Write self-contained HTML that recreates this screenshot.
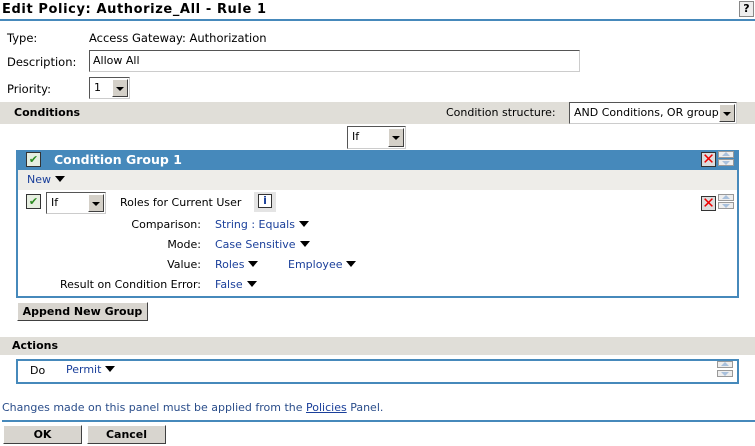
<!DOCTYPE html>
<html><head><style>
*{margin:0;padding:0;box-sizing:border-box}
body{width:755px;height:446px;background:#fff;font-family:"DejaVu Sans","Liberation Sans",sans-serif;font-size:11px;color:#000;position:relative;overflow:hidden}
.a{position:absolute;white-space:nowrap}
.lnk{color:#1a3f9a}
.tri{display:inline-block;width:0;height:0;border-left:5px solid transparent;border-right:5px solid transparent;border-top:6px solid #000;margin-left:4px;vertical-align:1px}
.sel{position:absolute;background:#fff;border:1px solid #555;border-right-color:#ccc;border-bottom-color:#ccc;padding-left:4px;line-height:19px}
.sel .b{position:absolute;right:1px;top:1px;bottom:1px;width:16px;background:#d4d0c8;border:1px solid;border-color:#fff #404040 #404040 #fff}
.sel .b:after{content:"";position:absolute;left:3px;top:7px;border-left:4px solid transparent;border-right:4px solid transparent;border-top:4px solid #000}
.bar{position:absolute;left:0;width:755px;background:#e0ded8;font-weight:bold}
.btn{position:absolute;background:#d8d5cf;border:1px solid;border-color:#fff #404040 #404040 #fff;font-weight:bold;text-align:center;line-height:17px}
.chk{position:absolute;width:15px;height:15px;border:1px solid #333;background:#e6eee0;color:#2a8a20;font-size:11px;line-height:13px;text-align:center;font-weight:bold}
.xx{position:absolute;width:15px;height:15px;border:1px solid #333;background:#ddd;color:#e00;font-weight:bold;font-size:15px;line-height:13px;text-align:center}
.ud{position:absolute;width:16px;height:7px;border:1px solid #999;background:#eee}
.ud:after{content:"";position:absolute;left:3px;border-left:4px solid transparent;border-right:4px solid transparent}
.up:after{top:0;border-bottom:4px solid #a8c0dc}
.dn:after{top:1px;border-top:4px solid #a8c0dc}
</style></head><body>
<div class="a" style="left:2px;top:2px;font-size:13px;font-weight:bold;letter-spacing:0.6px">Edit Policy: Authorize_All - Rule 1</div>
<div class="a" style="left:739px;top:1px;width:15px;height:16px;border:1px solid #888;background:#eee;font-weight:bold;text-align:center;line-height:14px">?</div>
<div class="a" style="left:0;top:19px;width:755px;height:2px;background:#4689bb"></div>

<div class="a" style="left:7px;top:31px;font-size:11.5px">Type:</div>
<div class="a" style="left:89px;top:31px;font-size:11.5px">Access Gateway: Authorization</div>
<div class="a" style="left:7px;top:55px;font-size:11.5px">Description:</div>
<div class="a" style="left:89px;top:50px;width:491px;height:22px;border:1px solid #555;border-right-color:#ccc;border-bottom-color:#ccc;padding:3px 3px;line-height:14px">Allow All</div>
<div class="a" style="left:7px;top:82px;font-size:11.5px">Priority:</div>
<div class="sel" style="left:89px;top:77px;width:41px;height:22px">1<div class="b"></div></div>

<div class="bar" style="top:102px;height:22px"><span class="a" style="left:14px;top:4px">Conditions</span></div>
<div class="a" style="left:446px;top:106px">Condition structure:</div>
<div class="sel" style="left:569px;top:102px;width:168px;height:22px;overflow:hidden">AND Conditions, OR groups<div class="b"></div></div>
<div class="sel" style="left:347px;top:126px;width:59px;height:23px">If<div class="b"></div></div>

<div class="a" style="left:16px;top:150px;width:723px;height:148px;border:2px solid #4689bb"></div>
<div class="a" style="left:16px;top:150px;width:723px;height:20px;background:#4689bb"></div>
<div class="chk" style="left:26px;top:152px">✔</div>
<div class="a" style="left:54px;top:152px;color:#fff;font-weight:bold;font-size:12.5px">Condition Group 1</div>
<div class="xx" style="left:701px;top:152px">✕</div>
<div class="ud up" style="left:718px;top:151px"></div><div class="ud dn" style="left:718px;top:159px"></div>
<div class="a" style="left:18px;top:170px;width:719px;height:20px;background:#eeede9"></div>
<div class="a lnk" style="left:27px;top:173px">New<span class="tri"></span></div>

<div class="chk" style="left:26px;top:194px">✔</div>
<div class="sel" style="left:46px;top:192px;width:60px;height:22px">If<div class="b"></div></div>
<div class="a" style="left:120px;top:196px">Roles for Current User</div>
<div class="a" style="left:254px;top:192px;width:22px;height:20px;background:#e4e4e4"><div style="position:absolute;left:4px;top:2px;width:14px;height:14px;border:1px solid #333;background:#fff;text-align:center;font-weight:bold;color:#1a3f9a;line-height:12px;font-size:11px">i</div></div>
<div class="xx" style="left:701px;top:196px">✕</div>
<div class="ud up" style="left:718px;top:194px"></div><div class="ud dn" style="left:718px;top:202px"></div>

<div class="a" style="right:554px;top:218px">Comparison:</div>
<div class="a lnk" style="left:215px;top:218px">String : Equals<span class="tri"></span></div>
<div class="a" style="right:554px;top:238px">Mode:</div>
<div class="a lnk" style="left:215px;top:238px">Case Sensitive<span class="tri"></span></div>
<div class="a" style="right:554px;top:258px">Value:</div>
<div class="a lnk" style="left:215px;top:258px">Roles<span class="tri"></span></div>
<div class="a lnk" style="left:288px;top:258px">Employee<span class="tri"></span></div>
<div class="a" style="right:554px;top:278px">Result on Condition Error:</div>
<div class="a lnk" style="left:215px;top:278px">False<span class="tri"></span></div>

<div class="btn" style="left:17px;top:302px;width:131px;height:19px">Append New Group</div>

<div class="bar" style="top:337px;height:18px"><span class="a" style="left:12px;top:2px">Actions</span></div>
<div class="a" style="left:16px;top:359px;width:723px;height:25px;border:2px solid #4689bb"></div>
<div class="a" style="left:30px;top:364px">Do</div>
<div class="a lnk" style="left:66px;top:363px">Permit<span class="tri"></span></div>
<div class="ud up" style="left:717px;top:361px"></div><div class="ud dn" style="left:717px;top:370px"></div>

<div class="a" style="left:2px;top:401px;color:#2a4d8a">Changes made on this panel must be applied from the <span style="text-decoration:underline;color:#1a3f9a">Policies</span> Panel.</div>
<div class="a" style="left:2px;top:420px;width:753px;height:2px;background:#4689bb"></div>
<div class="btn" style="left:3px;top:425px;width:79px;height:19px">OK</div>
<div class="btn" style="left:87px;top:425px;width:79px;height:19px">Cancel</div>
</body></html>
